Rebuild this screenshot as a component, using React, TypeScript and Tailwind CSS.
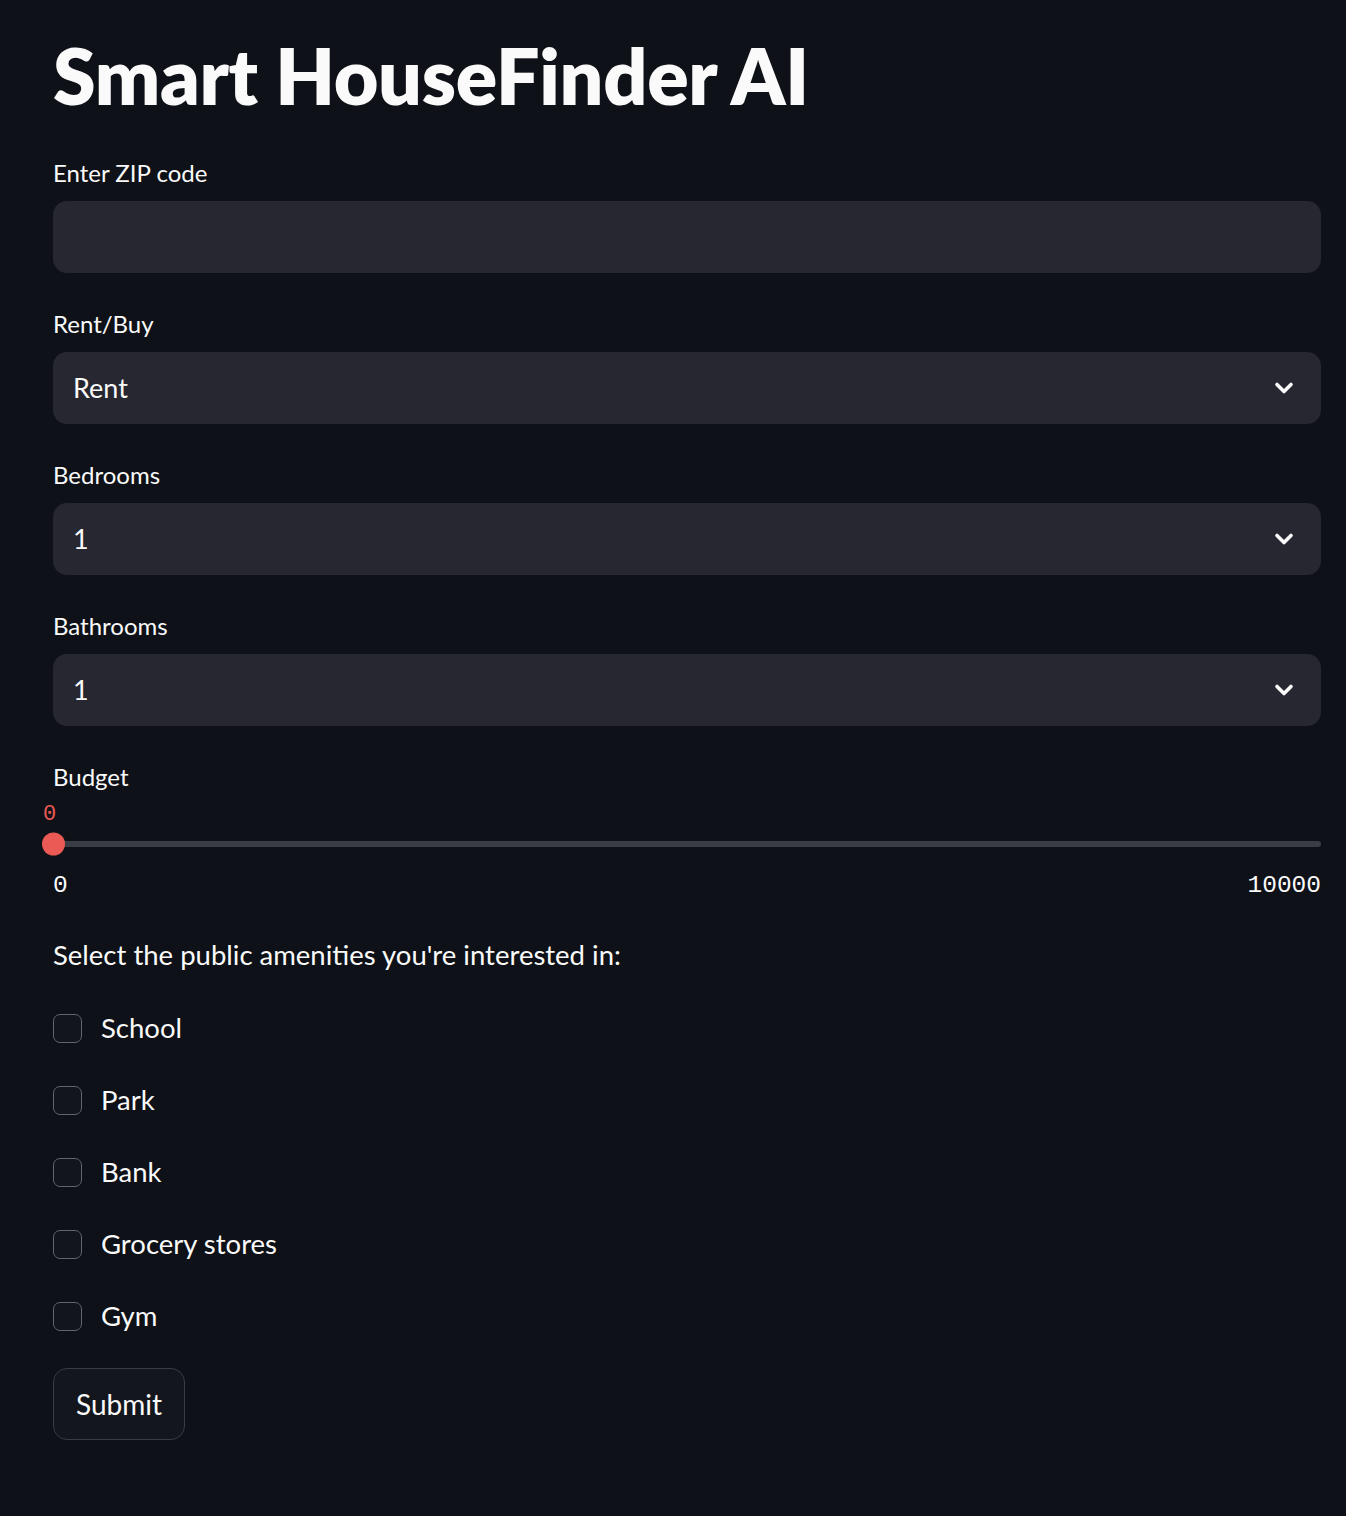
import React from "react";

const font = { fontFamily: '"Lato", "Noto Sans", sans-serif' };

const selects = [
    { label: "Rent/Buy", value: "Rent" },
    { label: "Bedrooms", value: "1" },
    { label: "Bathrooms", value: "1" },
];

const amenities = ["School", "Park", "Bank", "Grocery stores", "Gym"];

function Chevron() {
    return (
        <svg width="24" height="24" viewBox="0 0 24 24" fill="none" className="text-[#fafafa]">
            <path d="M5 8.5l7 7 7-7" stroke="currentColor" strokeWidth="3.6" strokeLinecap="round" strokeLinejoin="round" />
        </svg>
    );
}

function Label({ children }: { children: React.ReactNode }) {
    return <div className="h-[42px] mb-[7px] flex items-center text-[24px] text-[#fafafa]">{children}</div>;
}

export default function App() {
    return (
        <div className="min-h-[1516px] bg-[#0e1117] text-[#fafafa]" style={font}>
            <div className="px-[53px] pr-[25px] pt-[28px] flex flex-col">
                {/* Title */}
                <h1 className="text-[77px] font-extrabold leading-[94px] tracking-[-0.3px] mb-[30px]">Smart HouseFinder AI</h1>

                {/* ZIP input */}
                <div className="mb-[30px]">
                    <Label>Enter ZIP code</Label>
                    <input className="w-full h-[72px] rounded-[14px] bg-[#262730] outline-none px-5 text-[28px]" />
                </div>

                {/* Selects */}
                {selects.map((s) => (
                    <div key={s.label} className="mb-[30px]">
                        <Label>{s.label}</Label>
                        <div className="h-[72px] rounded-[14px] bg-[#262730] flex items-center justify-between pl-[20px] pr-[25px]">
                            <span className="text-[27px]">{s.value}</span>
                            <Chevron />
                        </div>
                    </div>
                ))}

                {/* Budget slider */}
                <div>
                    <Label>Budget</Label>
                    <div className="h-[28px] -mt-[5px] flex items-center font-['Liberation_Mono',monospace] text-[22px] text-[#eb5a55] -ml-[10px]">0</div>
                    <div className="h-[32px] flex items-center relative">
                        <div className="w-full h-[6px] rounded-full bg-[#3b3d45]" />
                        <div className="absolute -left-[11px] top-1/2 -translate-y-1/2 w-[23px] h-[23px] rounded-full bg-[#eb5a55]" />
                    </div>
                    <div className="h-[44px] mt-[4px] flex items-center justify-between font-['Liberation_Mono',monospace] text-[24.5px] text-[#fafafa]">
                        <span>0</span>
                        <span>10000</span>
                    </div>
                </div>

                {/* Amenities */}
                <div className="h-[48px] mt-[23px] flex items-center text-[27.5px]">Select the public amenities you're interested in:</div>
                <div className="flex flex-col mt-[13px]">
                    {amenities.map((a) => (
                        <label key={a} className="h-[72px] flex items-center gap-[19px] text-[27.5px]">
                            <span className="w-[29px] h-[29px] rounded-[7px] border-[1.5px] border-[#62646c] bg-[#12151c]" />
                            <span>{a}</span>
                        </label>
                    ))}
                </div>

                {/* Submit */}
                <div className="mt-[16px]">
                    <button className="h-[72px] px-[22px] rounded-[14px] border border-[#3a3c44] bg-[#13161d] text-[28px] text-[#fafafa]">Submit</button>
                </div>
            </div>
        </div>
    );
}
